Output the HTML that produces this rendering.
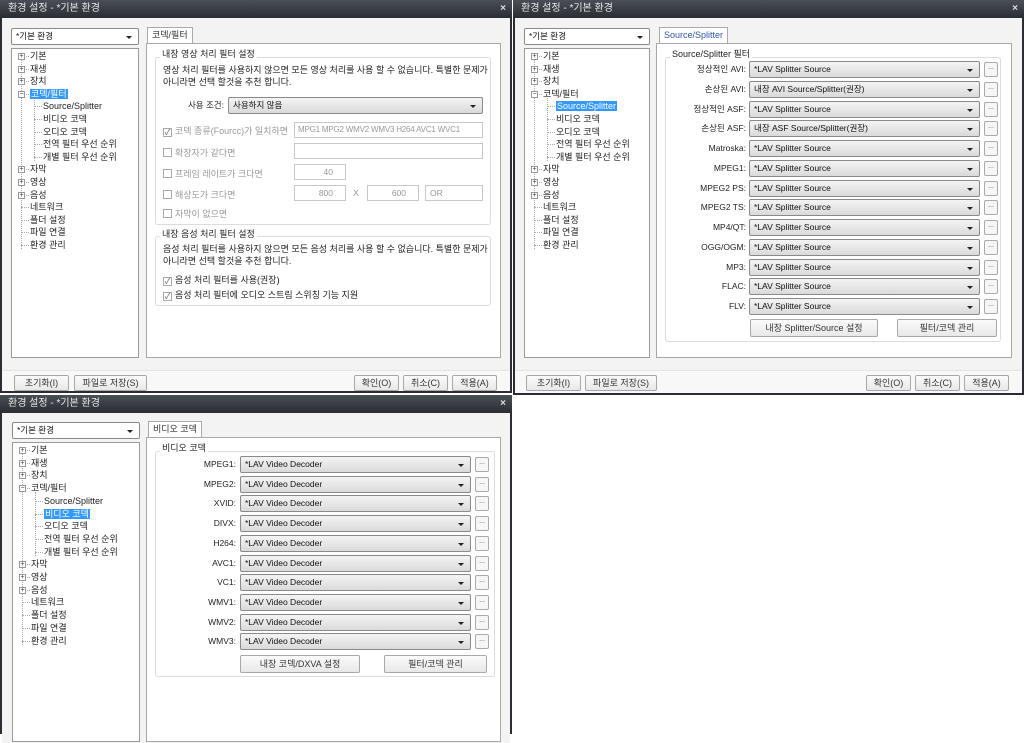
<!DOCTYPE html>
<html><head><meta charset="utf-8"><style>
*{box-sizing:border-box;margin:0;padding:0}
body{width:1024px;height:734px;background:#fff;position:relative;overflow:hidden;font-family:"Liberation Sans","Noto Sans CJK KR",sans-serif;font-size:9px;color:#222}
.a{position:absolute}
.win{position:absolute;background:#2a2d33}
.title{position:absolute;left:0;right:0;top:0;height:18px;background:linear-gradient(#4a4e56,#2a2d33);color:#e8e8e8;font-size:10px;line-height:17px;padding-left:8px}
.title .x{position:absolute;right:6px;top:0;font-weight:bold;color:#ddd}
.body{position:absolute;left:2px;right:2px;top:18px;background:#f3f3f3}
.bar{position:absolute;left:2px;right:2px;background:#f8f8f8;border-top:1px solid #e4e4e4}
.btn{position:absolute;height:16px;border:1px solid #a8a8a8;border-radius:2px;background:linear-gradient(#fbfbfb,#e8e8e8);text-align:center;line-height:14px;font-size:9px;color:#333}
.combo{position:absolute;height:17px;border:1px solid #8a8a8a;border-radius:2px;background:linear-gradient(#f4f4f4,#dadada);line-height:15px;padding-left:4px;font-size:8.5px;color:#111;white-space:nowrap;overflow:hidden}
.combo:after{content:"";position:absolute;right:6px;top:7px;border-left:3px solid transparent;border-right:3px solid transparent;border-top:3px solid #222}
.dots{position:absolute;width:14px;height:15px;border:1px solid #aaa;border-radius:2px;background:#f6f6f6;font-size:7px;text-align:center;line-height:10px;color:#555}
.lbl{position:absolute;text-align:right;font-size:8.5px;line-height:17px;color:#222}
.tree{position:absolute;background:#fff;border:1px solid #9a9a9a}
.ti{position:absolute;height:12px;line-height:12px;font-size:9px;white-space:nowrap}
.pl{position:absolute;width:7px;height:7px;border:1px solid #999;background:#fff;font-size:7px;line-height:5px;text-align:center;color:#333}
.sel{background:#3399ff;color:#fff;padding:0 1px}
.tab{position:absolute;height:17px;border:1px solid #aaa;border-bottom:none;background:#fff;font-size:9px;line-height:15px;padding:0 4px;color:#333}
.panel{position:absolute;background:#fff;border:1px solid #a8a8a8}
.grp{position:absolute;border:1px solid #dcdcdc;border-radius:3px}
.gt{position:absolute;background:#fff;padding:0 2px;font-size:9px;line-height:11px;color:#222}
.cb{display:inline-block;width:9px;height:9px;border:1px solid #aaa;background:#fff;vertical-align:-1px;margin-right:3px;font-size:8px;line-height:7px;text-align:center;color:#556}
.dis{color:#999}
.inp{position:absolute;height:16px;border:1px solid #c8c8c8;background:#fff;font-size:8.5px;line-height:14px;color:#999;padding:0 4px;white-space:nowrap;overflow:hidden}
</style></head><body>

<!-- WINDOW 1 -->
<div class="win" style="left:0;top:0;width:512px;height:393px">
 <div class="title">환경 설정 - *기본 환경<span class="x">×</span></div>
 <div class="body" style="height:352px"></div>
 <div class="bar" style="top:370px;height:21px"></div>
</div>
<div class="combo" style="left:11px;top:28px;width:128px;background:#fff">*기본 환경</div>
<div class="tree" style="left:11px;top:48px;width:128px;height:310px"></div>
<div class="tab" style="left:147px;top:27px">코덱/필터</div>
<div class="panel" style="left:146px;top:43px;width:355px;height:315px"></div>
<div class="grp" style="left:155px;top:57px;width:336px;height:168px"></div>
<div class="gt" style="left:160px;top:49px">내장 영상 처리 필터 설정</div>
<div class="a" style="left:163px;top:64px;width:325px;line-height:12px">영상 처리 필터를 사용하지 않으면 모든 영상 처리를 사용 할 수 없습니다. 특별한 문제가 아니라면 선택 할것을 추천 합니다.</div>
<div class="lbl" style="left:160px;top:97px;width:64px">사용 조건:</div>
<div class="combo" style="left:228px;top:97px;width:255px">사용하지 않음</div>
<div class="a dis" style="left:163px;top:124px"><span class="cb">✓</span>코덱 종류(Fourcc)가 일치하면</div>
<div class="inp" style="left:294px;top:122px;width:189px;font-size:8px;letter-spacing:-0.2px;padding:0 3px">MPG1 MPG2 WMV2 WMV3 H264 AVC1 WVC1</div>
<div class="a dis" style="left:163px;top:146px"><span class="cb"></span>확장자가 같다면</div>
<div class="inp" style="left:294px;top:143px;width:189px"></div>
<div class="a dis" style="left:163px;top:167px"><span class="cb"></span>프레임 레이트가 크다면</div>
<div class="inp" style="left:294px;top:164px;width:52px;text-align:right;padding-right:12px">40</div>
<div class="a dis" style="left:163px;top:188px"><span class="cb"></span>해상도가 크다면</div>
<div class="inp" style="left:294px;top:185px;width:52px;text-align:right;padding-right:12px">800</div>
<div class="a dis" style="left:353px;top:188px">X</div>
<div class="inp" style="left:367px;top:185px;width:52px;text-align:right;padding-right:12px">600</div>
<div class="inp" style="left:425px;top:185px;width:58px">OR</div>
<div class="a dis" style="left:163px;top:207px"><span class="cb"></span>자막이 없으면</div>
<div class="grp" style="left:155px;top:236px;width:336px;height:70px"></div>
<div class="gt" style="left:160px;top:229px">내장 음성 처리 필터 설정</div>
<div class="a" style="left:163px;top:243px;width:325px;line-height:12px">음성 처리 필터를 사용하지 않으면 모든 음성 처리를 사용 할 수 없습니다. 특별한 문제가 아니라면 선택 할것을 추천 합니다.</div>
<div class="a" style="left:163px;top:273px"><span class="cb">✓</span>음성 처리 필터를 사용(권장)</div>
<div class="a" style="left:163px;top:288px"><span class="cb">✓</span>음성 처리 필터에  오디오 스트림 스위칭 기능 지원</div>
<div class="btn" style="left:14px;top:375px;width:55px">초기화(I)</div>
<div class="btn" style="left:74px;top:375px;width:73px">파일로 저장(S)</div>
<div class="btn" style="left:354px;top:375px;width:45px">확인(O)</div>
<div class="btn" style="left:403px;top:375px;width:45px">취소(C)</div>
<div class="btn" style="left:452px;top:375px;width:45px">적용(A)</div>

<!-- WINDOW 2 -->
<div class="win" style="left:513px;top:0;width:511px;height:395px">
 <div class="title">환경 설정 - *기본 환경<span class="x">×</span></div>
 <div class="body" style="height:352px"></div>
 <div class="bar" style="top:370px;height:23px"></div>
</div>
<div class="combo" style="left:524px;top:28px;width:126px;background:#fff">*기본 환경</div>
<div class="tree" style="left:524px;top:48px;width:126px;height:310px"></div>
<div class="tab" style="left:659px;top:27px;color:#35a">Source/Splitter</div>
<div class="panel" style="left:656px;top:43px;width:356px;height:315px"></div>
<div class="grp" style="left:665px;top:57px;width:336px;height:285px"></div>
<div class="gt" style="left:670px;top:49px">Source/Splitter 필터</div>

<div class="btn" style="left:750px;top:319px;width:128px;height:18px;line-height:16px">내장 Splitter/Source 설정</div>
<div class="btn" style="left:897px;top:319px;width:100px;height:18px;line-height:16px">필터/코덱 관리</div>
<div class="btn" style="left:526px;top:375px;width:55px">초기화(I)</div>
<div class="btn" style="left:585px;top:375px;width:72px">파일로 저장(S)</div>
<div class="btn" style="left:866px;top:375px;width:45px">확인(O)</div>
<div class="btn" style="left:915px;top:375px;width:45px">취소(C)</div>
<div class="btn" style="left:964px;top:375px;width:45px">적용(A)</div>

<!-- WINDOW 3 -->
<div class="win" style="left:0;top:395px;width:512px;height:339px">
 <div class="title">환경 설정 - *기본 환경<span class="x">×</span></div>
 <div class="body" style="height:330px"></div>
</div>
<div class="combo" style="left:12px;top:422px;width:128px;background:#fff">*기본 환경</div>
<div class="tree" style="left:12px;top:442px;width:128px;height:300px"></div>
<div class="tab" style="left:148px;top:421px">비디오 코덱</div>
<div class="panel" style="left:146px;top:437px;width:355px;height:305px"></div>
<div class="grp" style="left:155px;top:451px;width:340px;height:226px"></div>
<div class="gt" style="left:160px;top:443px">비디오 코덱</div>
<div class="btn" style="left:240px;top:655px;width:120px;height:18px;line-height:16px">내장 코덱/DXVA 설정</div>
<div class="btn" style="left:384px;top:655px;width:103px;height:18px;line-height:16px">필터/코덱 관리</div>

<div id="gen"></div>
<script>
var g=document.getElementById('gen'),h='';
function tree(x,y,step,selIdx){
 var it=[['기본',0,1],['재생',0,1],['장치',0,1],['코덱/필터',0,2],['Source/Splitter',1],['비디오 코덱',1],['오디오 코덱',1],['전역 필터 우선 순위',1],['개별 필터 우선 순위',1],['자막',0,1],['영상',0,1],['음성',0,1],['네트워크',0,0],['폴더 설정',0,0],['파일 연결',0,0],['환경 관리',0,0]];
 h+='<div class="a" style="left:'+(x+3)+'px;top:'+(y+4)+'px;height:'+(step*15)+'px;border-left:1px dotted #aaa"></div>';
 h+='<div class="a" style="left:'+(x+16)+'px;top:'+(y+4+step*3)+'px;height:'+(step*5)+'px;border-left:1px dotted #aaa"></div>';
 for(var i=0;i<it.length;i++){var t=it[i],yy=y+i*step-6;
  if(t[1]){h+='<div class="a" style="left:'+(x+16)+'px;top:'+(yy+6)+'px;width:8px;border-top:1px dotted #aaa"></div>';
   h+='<div class="ti" style="left:'+(x+25)+'px;top:'+yy+'px"><span class="'+(i==selIdx?'sel':'')+'">'+t[0]+'</span></div>';}
  else{h+='<div class="a" style="left:'+(x+3)+'px;top:'+(yy+6)+'px;width:8px;border-top:1px dotted #aaa"></div>';
   if(t[2])h+='<div class="pl" style="left:'+x+'px;top:'+(yy+3)+'px">'+(t[2]==2?'−':'+')+'</div>';
   h+='<div class="ti" style="left:'+(x+12)+'px;top:'+yy+'px"><span class="'+(i==selIdx?'sel':'')+'">'+t[0]+'</span></div>';}
 }
}
tree(18,56,12.6,3);tree(531,56,12.6,4);tree(19,450,12.7,5);
function rows(lx,lw,cx,cw,y0,step,list){
 for(var i=0;i<list.length;i++){var y=Math.round(y0+i*step)-8;var v=list[i][1]||'*LAV Splitter Source';
  h+='<div class="lbl" style="left:'+lx+'px;top:'+y+'px;width:'+lw+'px">'+list[i][0]+'</div>';
  h+='<div class="combo" style="left:'+cx+'px;top:'+y+'px;width:'+cw+'px">'+v+'</div>';
  h+='<div class="dots" style="left:'+(cx+cw+4)+'px;top:'+(y+1)+'px">...</div>';}
}
rows(668,78,749,231,69,19.75,[['정상적인 AVI:'],['손상된 AVI:','내장 AVI Source/Splitter(권장)'],['정상적인 ASF:'],['손상된 ASF:','내장 ASF Source/Splitter(권장)'],['Matroska:'],['MPEG1:'],['MPEG2 PS:'],['MPEG2 TS:'],['MP4/QT:'],['OGG/OGM:'],['MP3:'],['FLAC:'],['FLV:']]);
var L=[];['MPEG1:','MPEG2:','XVID:','DIVX:','H264:','AVC1:','VC1:','WMV1:','WMV2:','WMV3:'].forEach(function(s){L.push([s,'*LAV Video Decoder'])});
rows(160,76,240,231,464,19.7,L);
g.innerHTML=h;
</script>
</body></html>
